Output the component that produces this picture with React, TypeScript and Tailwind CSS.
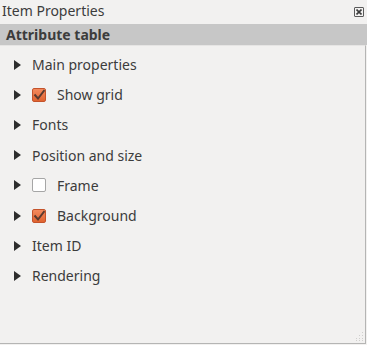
import React from 'react'

const font = { fontFamily: '"Noto Sans", "Open Sans", sans-serif' }

type Row = { label: string; check?: boolean }

const rows: Row[] = [
  { label: 'Main properties' },
  { label: 'Show grid', check: true },
  { label: 'Fonts' },
  { label: 'Position and size' },
  { label: 'Frame', check: false },
  { label: 'Background', check: true },
  { label: 'Item ID' },
  { label: 'Rendering' },
]

function Arrow() {
  return (
    <svg width="7" height="10" viewBox="0 0 7 10" className="shrink-0">
      <path d="M0 0 L7 5 L0 10 Z" fill="#2e2e2e" />
    </svg>
  )
}

function Checkbox({ checked }: { checked: boolean }) {
  if (!checked) {
    return <div className="w-[14px] h-[14px] rounded-[2px] border border-[#a6a6a6] bg-white shrink-0" />
  }
  return (
    <div className="w-[14px] h-[14px] rounded-[2px] border border-[#c4532b] bg-gradient-to-b from-[#f48a5d] to-[#e0632f] shrink-0 flex items-center justify-center">
      <svg width="12" height="12" viewBox="0 0 12 12">
        <path d="M1.5 5.5 L5 9.5 L11.5 1" stroke="#5a3b30" strokeWidth="2" fill="none" />
      </svg>
    </div>
  )
}

export default function App() {
  return (
    <div className="w-[367px] h-[345px] bg-[#f2f1f0] flex flex-col text-[#3c3c3c]" style={font}>
      {/* Dock title */}
      <div className="h-[24px] flex items-center justify-between pl-[2px] pr-[3px]">
        <span className="text-[14px] leading-none -mt-[2px]">Item Properties</span>
        <div className="w-[10px] h-[10px] border border-[#5a5a5a] rounded-[1px] flex items-center justify-center">
          <svg width="6" height="6" viewBox="0 0 6 6">
            <path d="M0.5 0.5 L5.5 5.5 M5.5 0.5 L0.5 5.5" stroke="#3c3c3c" strokeWidth="1.6" />
          </svg>
        </div>
      </div>

      {/* Section header */}
      <div className="h-[21px] bg-[#c7c7c7] flex items-center pl-[6px]">
        <span className="text-[14px] font-bold leading-none">Attribute table</span>
      </div>

      {/* Content */}
      <div className="flex-1 border-t border-[#e6e5e4] border-r border-b border-r-[#b5b5b4] border-b-[#b5b5b4] mr-[1px] mb-[1px] relative pt-[3.5px]">
        {rows.map((r) => (
          <div key={r.label} className="h-[30.2px] flex items-center pl-[14px]">
            <Arrow />
            {r.check === undefined ? (
              <span className="ml-[11px] text-[14px]">{r.label}</span>
            ) : (
              <>
                <div className="ml-[11px]">
                  <Checkbox checked={r.check} />
                </div>
                <span className="ml-[11px] text-[14px]">{r.label}</span>
              </>
            )}
          </div>
        ))}
        <svg width="10" height="10" viewBox="0 0 10 10" className="absolute right-[1px] bottom-[1px]">
          {[
            [8, 0],
            [8, 3],
            [5, 3],
            [8, 6],
            [5, 6],
            [2, 6],
            [8, 8],
            [5, 8],
            [2, 8],
          ].map(([x, y], i) => (
            <rect key={i} x={x} y={y} width="1" height="1" fill="#d0cfcd" />
          ))}
        </svg>
      </div>
    </div>
  )
}
